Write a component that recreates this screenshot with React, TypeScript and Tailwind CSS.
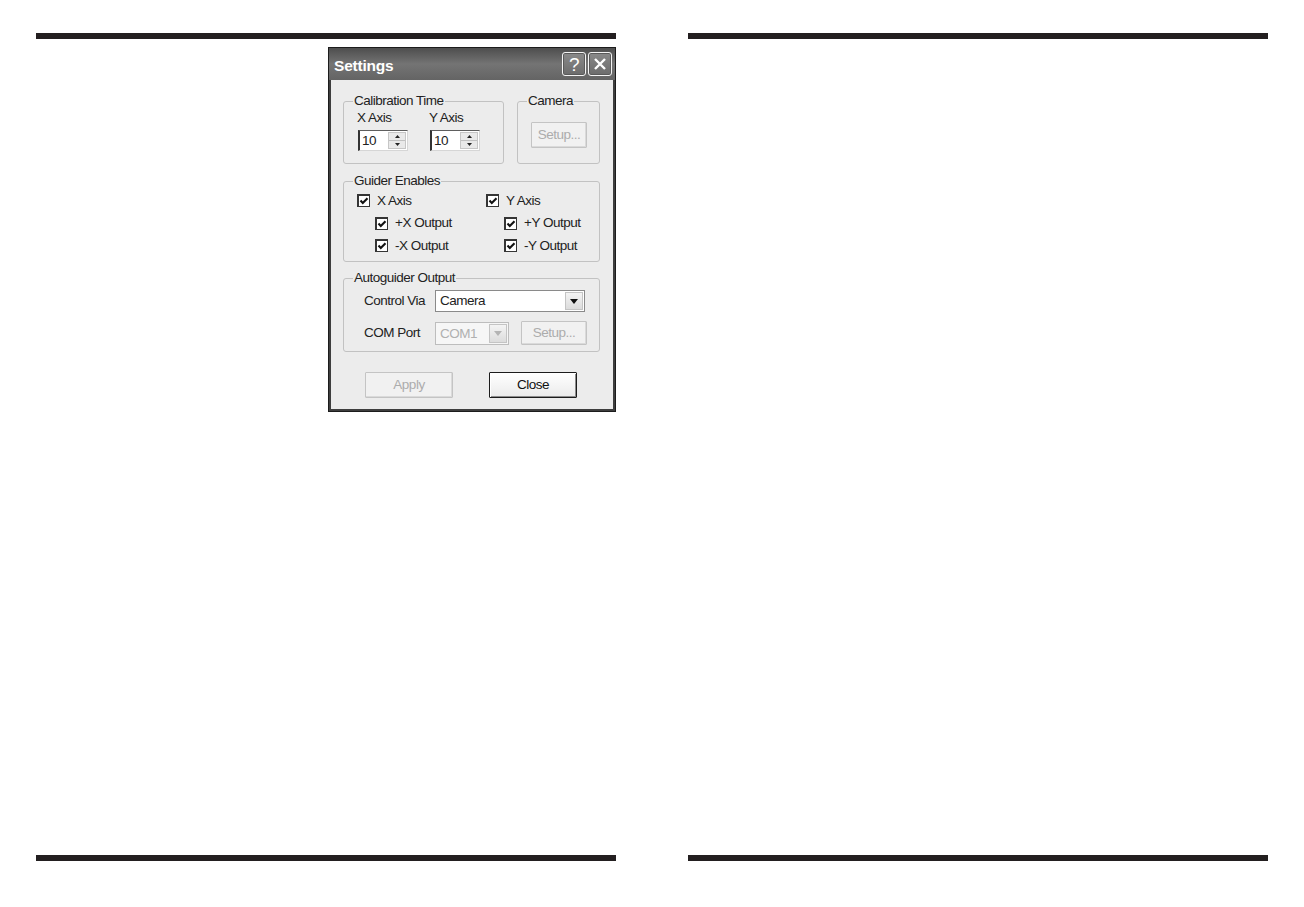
import type { ReactNode } from "react";

function PageBar() {
  return <div className="h-[6px] bg-[#231f20]" />;
}

function TitleButton({ children }: { children: ReactNode }) {
  return (
    <div className="flex h-[24px] w-[24px] items-center justify-center rounded-[3px] border border-[#f4f4f4] bg-linear-to-b from-[#8a8a8a] to-[#6c6c6c] text-white shadow-[inset_0_0_0_1px_#5a5a5a]">
      {children}
    </div>
  );
}

function Check({ label }: { label: string }) {
  return (
    <div className="flex h-[13px] items-center gap-[7px]">
      <span className="flex h-[13px] w-[13px] shrink-0 items-center justify-center border border-t-2 border-l-2 border-[#353535] bg-white">
        <svg width="10" height="10" viewBox="0 0 10 10">
          <polyline points="1.5,4.5 3.8,7 8.5,2.2" fill="none" stroke="#111" strokeWidth="2.1" />
        </svg>
      </span>
      <span className="leading-[14px]">{label}</span>
    </div>
  );
}

function Spinner({ value }: { value: string }) {
  return (
    <div className="flex h-[21px] w-[50px] border-y border-r border-l-2 border-t-[#5e5e5e] border-r-[#d6d6d6] border-b-[#d6d6d6] border-l-[#333333] bg-white">
      <span className="flex-1 pl-[2px] leading-[19px]">{value}</span>
      <div className="my-[1px] mr-[1px] flex w-[18px] flex-col border border-[#c6c6c6] bg-[#e9e9e9]">
        <div className="flex flex-1 items-center justify-center border-b border-[#c0c0c0]">
          <svg width="5" height="3" viewBox="0 0 5 3">
            <polygon points="0,3 2.5,0 5,3" fill="#222" />
          </svg>
        </div>
        <div className="flex flex-1 items-center justify-center">
          <svg width="5" height="3" viewBox="0 0 5 3">
            <polygon points="0,0 2.5,3 5,0" fill="#222" />
          </svg>
        </div>
      </div>
    </div>
  );
}

function ArrowButton({ disabled }: { disabled?: boolean }) {
  return (
    <div className="my-[1px] mr-[1px] flex w-[18px] items-center justify-center border border-[#c4c4c4] bg-linear-to-b from-[#f4f4f4] to-[#dcdcdc]">
      <svg width="8" height="5" viewBox="0 0 8 5">
        <polygon points="0,0 8,0 4,5" fill={disabled ? "#b4b4b4" : "#111"} />
      </svg>
    </div>
  );
}

function Button({
  label,
  disabled,
  primary,
  className,
}: {
  label: string;
  disabled?: boolean;
  primary?: boolean;
  className: string;
}) {
  const look = disabled
    ? "border-[#c4c4c4] bg-[#f1f1f1] text-[#acacac] shadow-[inset_-1px_-1px_0_#dadada]"
    : primary
      ? "border-[#1c1c1c] bg-linear-to-b from-white to-[#ebebeb] text-[#111] shadow-[inset_1px_1px_0_#ffffff,inset_-1px_-1px_0_#8c8c8c]"
      : "border-[#555] bg-linear-to-b from-white to-[#ebebeb] text-[#111]";
  return (
    <div className={`flex items-center justify-center rounded-[1px] border ${look} ${className}`}>
      {label}
    </div>
  );
}

function Group({
  title,
  className,
  children,
}: {
  title: string;
  className: string;
  children: ReactNode;
}) {
  return (
    <fieldset className={`rounded-[3px] border border-[#c2c2c2] ${className}`}>
      <legend className="ml-[9px] px-[1px] leading-[14px]">{title}</legend>
      {children}
    </fieldset>
  );
}

function SettingsDialog() {
  return (
    <div className="w-[288px] border border-[#1c1c1c] bg-[#3e3e3e] text-[13.5px] tracking-[-0.5px] text-[#222]">
      {/* Title bar */}
      <div className="flex h-[32px] items-center bg-linear-to-b from-[#4e4e4e] via-[#747474] to-[#646464] pl-[5px] pr-[3px]">
        <span className="pt-[3px] text-[15.5px] font-bold tracking-[-0.2px] text-white">Settings</span>
        <div className="ml-auto flex gap-[2px]">
          <TitleButton>
            <span className="text-[19px] leading-none font-normal">?</span>
          </TitleButton>
          <TitleButton>
            <svg width="14" height="14" viewBox="0 0 14 14">
              <path d="M2 2 L12 12 M12 2 L2 12" stroke="#fff" strokeWidth="2.4" />
            </svg>
          </TitleButton>
        </div>
      </div>

      <div className="mx-[2px] mb-[2px] bg-[#ececec] pt-[14px] pr-[13px] pb-[11px] pl-[12px]">
        <div className="flex gap-[13px]">
          <Group title="Calibration Time" className="h-[70px] w-[161px]">
            <div className="mt-[3px] flex pl-[13px]">
              <div className="w-[72px]">
                <div className="leading-[14px]">X Axis</div>
                <div className="mt-[5px] ml-[1px]">
                  <Spinner value="10" />
                </div>
              </div>
              <div>
                <div className="leading-[14px]">Y Axis</div>
                <div className="mt-[5px] ml-[1px]">
                  <Spinner value="10" />
                </div>
              </div>
            </div>
          </Group>
          <Group title="Camera" className="h-[70px] w-[83px]">
            <Button label="Setup..." disabled className="mt-[14px] ml-[13px] h-[26px] w-[56px]" />
          </Group>
        </div>

        <Group title="Guider Enables" className="mt-[10px] h-[88px] w-full">
          <div className="mt-[6px] grid grid-cols-[129px_1fr] pl-[13px]">
            <div className="flex flex-col gap-[9.5px]">
              <Check label="X Axis" />
              <div className="pl-[18px]">
                <Check label="+X Output" />
              </div>
              <div className="pl-[18px]">
                <Check label="-X Output" />
              </div>
            </div>
            <div className="flex flex-col gap-[9.5px]">
              <Check label="Y Axis" />
              <div className="pl-[18px]">
                <Check label="+Y Output" />
              </div>
              <div className="pl-[18px]">
                <Check label="-Y Output" />
              </div>
            </div>
          </div>
        </Group>

        <Group title="Autoguider Output" className="mt-[9px] h-[81px] w-full">
          <div className="mt-[5px] flex flex-col gap-[9px] pl-[20px]">
            <div className="flex items-center">
              <span className="w-[71px]">Control Via</span>
              <div className="flex h-[22px] w-[150px] border border-[#8a8a8a] bg-white">
                <span className="flex-1 pl-[4px] leading-[20px]">Camera</span>
                <ArrowButton />
              </div>
            </div>
            <div className="flex items-center">
              <span className="w-[71px]">COM Port</span>
              <div className="flex h-[23px] w-[74px] border border-[#bdbdbd] bg-[#f6f6f6]">
                <span className="flex-1 pl-[4px] leading-[21px] text-[#b0b0b0]">COM1</span>
                <ArrowButton disabled />
              </div>
              <Button label="Setup..." disabled className="ml-[12px] h-[24px] w-[66px]" />
            </div>
          </div>
        </Group>

        <div className="mt-[20px] flex pl-[22px]">
          <Button label="Apply" disabled className="h-[26px] w-[88px]" />
          <Button label="Close" primary className="ml-[36px] h-[26px] w-[88px]" />
        </div>
      </div>
    </div>
  );
}

export default function App() {
  return (
    <div className="flex h-[907px] w-[1304px] gap-[72px] bg-white pl-[36px] font-['Liberation_Sans',Arial,sans-serif]">
      <section className="flex w-[580px] flex-col">
        <div className="mt-[33px]">
          <PageBar />
        </div>
        <div className="mt-[8px] ml-[292px]">
          <SettingsDialog />
        </div>
        <div className="flex-1" />
        <div className="mb-[46px]">
          <PageBar />
        </div>
      </section>
      <section className="flex w-[580px] flex-col">
        <div className="mt-[33px]">
          <PageBar />
        </div>
        <div className="flex-1" />
        <div className="mb-[46px]">
          <PageBar />
        </div>
      </section>
    </div>
  );
}
